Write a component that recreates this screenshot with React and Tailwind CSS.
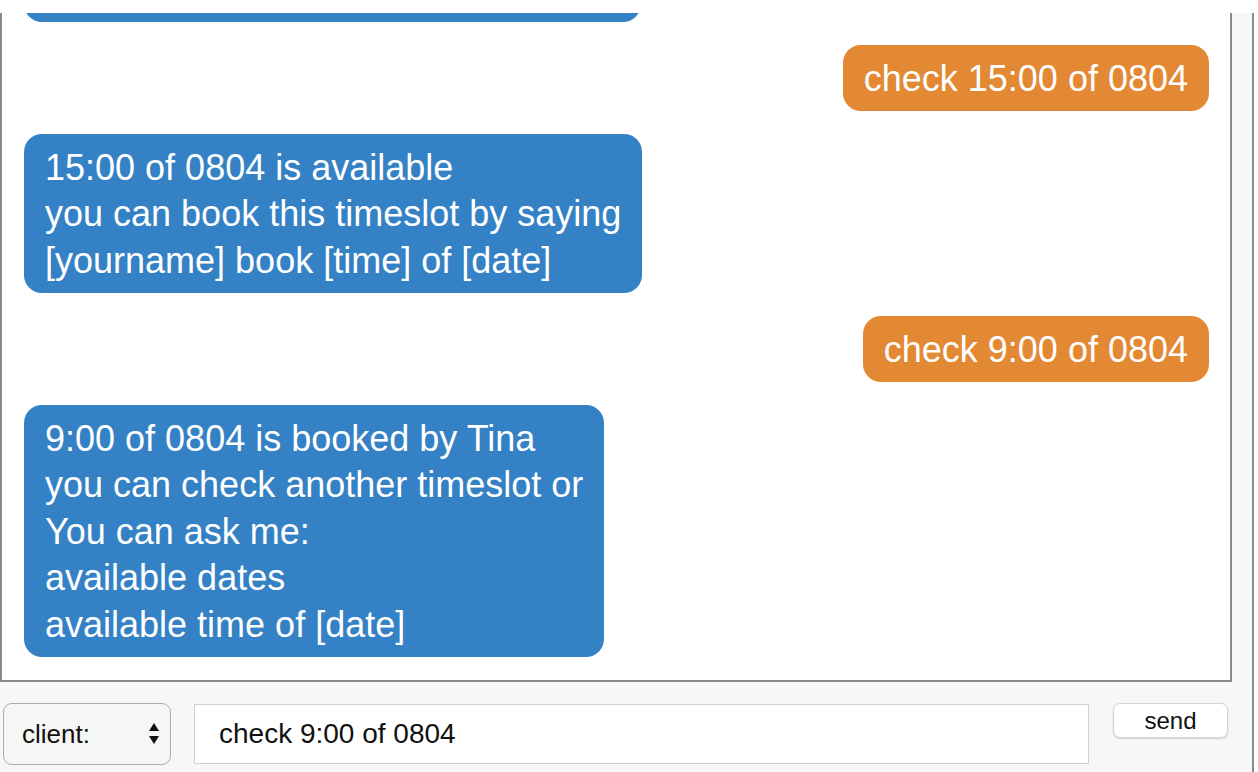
import React from "react";

const font = { fontFamily: '"Liberation Sans", Arial, sans-serif' };

function Left({ lines }) {
  return (
    <div className="flex justify-start">
      <div className="bg-[#3481c5] text-white rounded-[18px] px-[21px] pt-[11px] pb-[9px] text-[36px] leading-[46.5px] whitespace-nowrap">
        {lines.map((l, i) => (
          <div key={i}>{l}</div>
        ))}
      </div>
    </div>
  );
}

function Right({ text }) {
  return (
    <div className="flex justify-end">
      <div className="bg-[#e38833] text-white rounded-[18px] px-[21px] pt-[11px] pb-[9px] text-[36px] leading-[46.5px] whitespace-nowrap">
        {text}
      </div>
    </div>
  );
}

export default function App() {
  return (
    <div
      className="w-[1258px] h-[772px] bg-[#f7f7f7] flex flex-col overflow-hidden"
      style={font}
    >
      <div className="h-[13px] bg-white shrink-0" />
      <div className="flex flex-1 min-h-0">
        <div className="w-[1252px] flex flex-col">
          <div className="w-[1232px] h-[669px] bg-white border-l-2 border-r-2 border-b-2 border-[#8a8a8a] overflow-hidden flex flex-col justify-end gap-[22.5px] pl-[22px] pr-[21px] pb-[23px]">
            <div className="flex justify-start shrink-0">
              <div className="w-[617px] h-[160px] bg-[#3481c5] rounded-[18px]" />
            </div>
            <Right text="check 15:00 of 0804" />
            <Left
              lines={[
                "15:00 of 0804 is available",
                "you can book this timeslot by saying",
                "[yourname] book [time] of [date]",
              ]}
            />
            <Right text="check 9:00 of 0804" />
            <Left
              lines={[
                "9:00 of 0804 is booked by Tina",
                "you can check another timeslot or",
                "You can ask me:",
                "available dates",
                "available time of [date]",
              ]}
            />
          </div>
          <div className="flex items-start pt-[21px] pl-[3px]">
            <div className="w-[168px] h-[62px] rounded-[9px] border-[1.5px] border-[#adadad] bg-[#f6f6f6] flex items-center justify-between pl-[18px] pr-[10px]">
              <span className="text-[26px] text-[#111]">client:</span>
              <svg width="12" height="26" viewBox="0 0 12 26">
                <path d="M6 2 L11 10 L1 10 Z" fill="#111" />
                <path d="M1 15 L11 15 L6 23 Z" fill="#111" />
              </svg>
            </div>
            <div className="ml-[23px] mt-px w-[895px] h-[60px] bg-white border border-[#cfcfcf] flex items-center pl-[24px]">
              <span className="text-[28px] text-[#111]">check 9:00 of 0804</span>
            </div>
            <div className="ml-[24px] w-[115px] h-[35px] bg-white border border-[#d3d3d3] rounded-[7px] shadow-[0_1px_2px_rgba(0,0,0,0.15)] flex items-center justify-center">
              <span className="text-[24px] text-[#111] leading-none">send</span>
            </div>
          </div>
        </div>
        <div className="w-[2px] bg-[#8a8a8a]" />
        <div className="flex-1 bg-white" />
      </div>
    </div>
  );
}
